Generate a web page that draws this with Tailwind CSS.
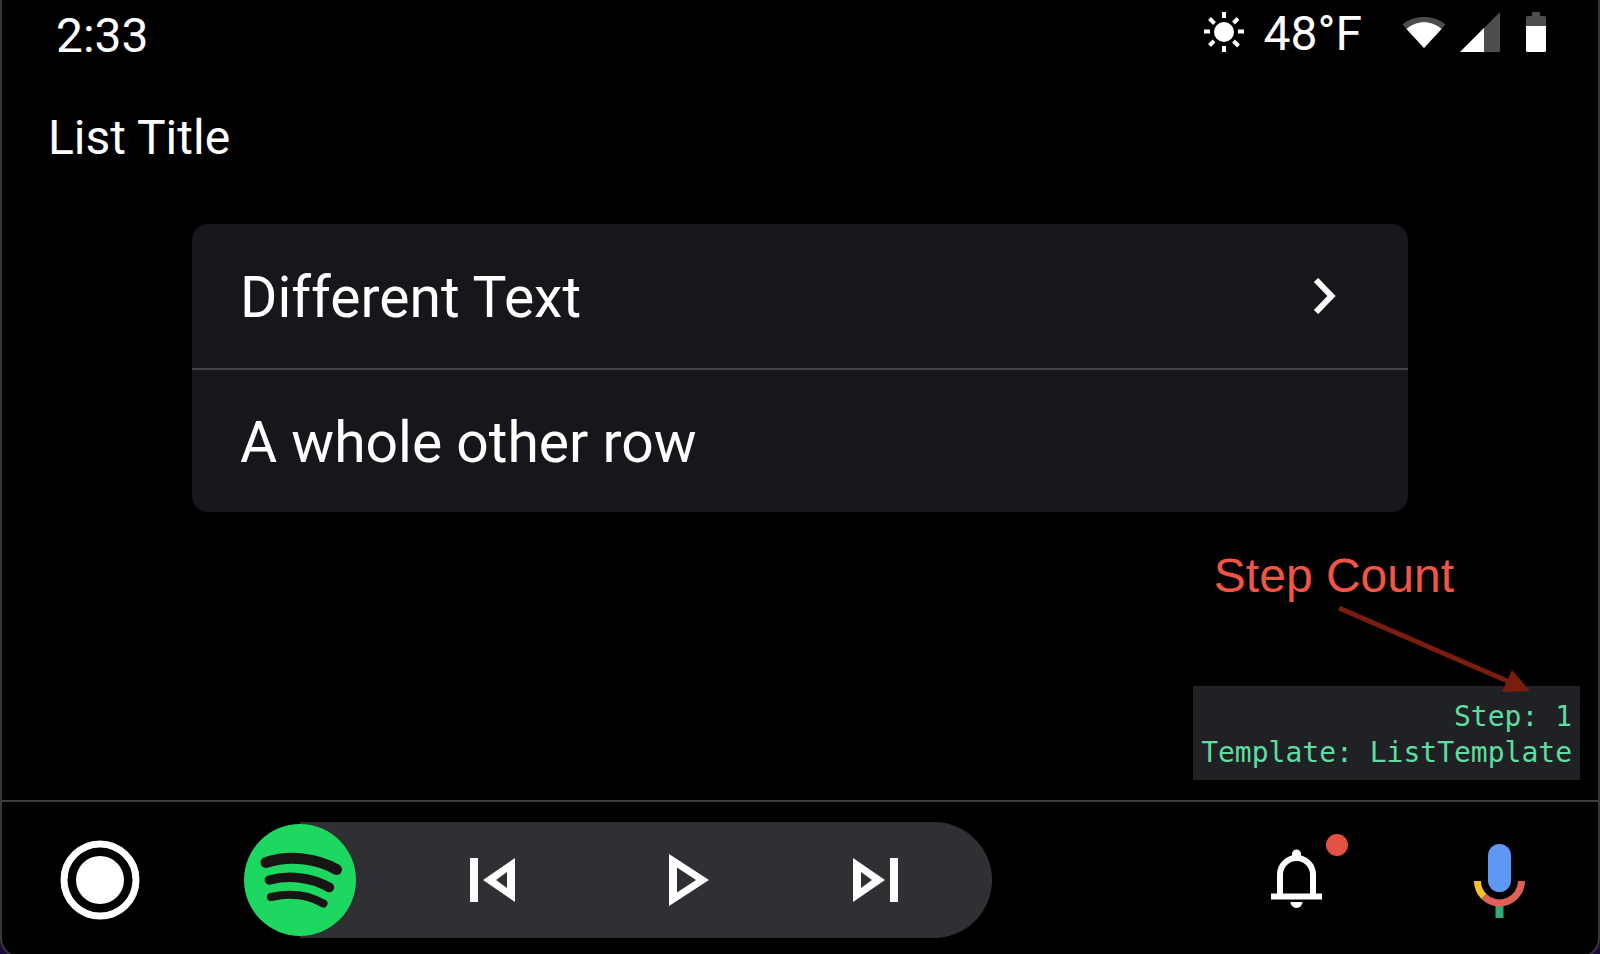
<!DOCTYPE html>
<html lang="en">

<head>
  <meta charset="UTF-8">
  <meta name="viewport" content="width=device-width, initial-scale=1.0">
  <title>List Title</title>
  <script src="https://cdn.jsdelivr.net/npm/@tailwindcss/browser@4"></script>
</head>

<body class="bg-[#1d0a3d] text-white font-[Roboto,sans-serif]">
  <div class="h-screen overflow-hidden">
    <div class="h-[calc(100%+4px)] flex flex-col bg-black border-2 border-t-0 border-[#383838] rounded-b-[20px]">

      <!-- status bar -->
      <header class="flex items-start justify-between pt-2 pl-[54px] pr-[52px] text-[48px]">
        <time class="leading-[56px]">2:33</time>
        <div class="flex items-center h-[52px] leading-[52px]">
          <svg class="w-10 h-11 mr-5" viewBox="0 0 40 44" fill="none" stroke="#fff" stroke-width="4">
            <circle cx="20" cy="20" r="10" fill="#fff" stroke="none" />
            <path d="M20 0v6M20 34v6M0 19.500h6M34 19.500h6M5.500 6.500l5 5M34 6.500l-4.500 4.500M5.500 33.500l4.500-4.500M34.500 34l-5-5" />
          </svg>
          <span>48°F</span>
          <svg class="w-11 h-11 ml-10" viewBox="0 0 44 44">
            <path d="M22 36L.5 12.500C12 2.500 32 2.500 43.500 12.500z" fill="#4d4d4d" />
            <path d="M22 36L4.500 17C14 8 30 8 39.500 17z" fill="#fff" />
          </svg>
          <svg class="w-10 h-11 ml-[14px]" viewBox="0 0 40 44">
            <path d="M0 40L40 0v40z" fill="#4d4d4d" />
            <path d="M0 40L24 16v24z" fill="#fff" />
          </svg>
          <svg class="w-5 h-11 ml-[26px]" viewBox="0 0 20 44">
            <path d="M6 0h8v4h4.500a1.500 1.500 0 0 1 1.500 1.500V14H0V5.500A1.500 1.500 0 0 1 1.500 4H6z" fill="#4d4d4d" />
            <path d="M0 14h20v24.500a1.500 1.500 0 0 1-1.500 1.500h-17A1.500 1.500 0 0 1 0 38.500z" fill="#fff" />
          </svg>
        </div>
      </header>

      <main class="flex-1 flex flex-col">
        <h1 class="mt-[46px] pl-[46px] text-[48px] leading-[56px]">List Title</h1>

        <ul class="mt-[58px] mx-[190px] rounded-2xl overflow-hidden bg-[#16171a] text-[57px] leading-[64px]">
          <li>
            <button class="w-full h-36 flex items-center justify-between pl-12 pr-[60px] text-left">
              <span class="pt-1">Different Text</span>
              <svg class="w-12 h-12" viewBox="0 0 48 48" fill="none" stroke="#fff" stroke-width="6">
                <path d="M16 8l15.500 16L16 40" />
              </svg>
            </button>
          </li>
          <li class="h-36 flex items-center pl-12 border-t-2 border-[#414347]">
            <span class="pt-1">A whole other row</span>
          </li>
        </ul>

        <!-- debug overlay with its callout -->
        <div class="relative self-end mt-auto mr-[18px] mb-5 px-2 pt-[13px] pb-[9px] bg-[#202124] text-right font-['DejaVu_Sans_Mono',monospace] text-[28px] leading-9 text-[#5fdca0]">
          <p>Step: 1</p>
          <p>Template: ListTemplate</p>
          <p class="absolute right-[126px] bottom-[176px] whitespace-nowrap font-['Liberation_Sans',sans-serif] text-[48px] leading-[56px] text-[#f05545]">Step Count</p>
          <svg class="absolute right-[48px] bottom-[84px] w-[196px] h-[92px]" viewBox="0 0 196 92">
            <path d="M3 4L176 79" stroke="#7a1c0e" stroke-width="5" />
            <path d="M176 66l18 21-28 1z" fill="#7a1c0e" />
          </svg>
        </div>
      </main>

      <!-- navigation bar -->
      <footer class="h-[156px] flex items-center border-t-2 border-[#3c3c3c] pt-0.5 pl-[58px] pr-[58px]">
        <button aria-label="Home">
          <svg class="w-20 h-20" viewBox="0 0 80 80">
            <circle cx="40" cy="40" r="36" fill="none" stroke="#fff" stroke-width="7" />
            <circle cx="40" cy="40" r="24" fill="#fff" />
          </svg>
        </button>

        <div class="flex items-center ml-[104px]">
          <button class="relative z-10" aria-label="Spotify">
            <svg class="w-28 h-28" viewBox="0 0 112 112" fill="none" stroke="#191414" stroke-linecap="round">
              <circle cx="56" cy="56" r="56" fill="#1ed760" stroke="none" />
              <path d="M22 38.500C46 31 72 34 92.500 45.500" stroke-width="11" />
              <path d="M25.500 56C45 51 67 53 85.500 63.500" stroke-width="9.500" />
              <path d="M27 73C44 69 63 70 79.500 79.500" stroke-width="8" />
            </svg>
          </button>
          <div class="flex items-center -ml-14 h-[116px] pl-24 pr-5 rounded-r-full bg-[#2f3034]">
            <button class="w-48 flex justify-center" aria-label="Previous">
              <svg class="w-16 h-16" viewBox="0 0 64 64" fill="#fff" fill-rule="evenodd">
                <path d="M10 10h8v44h-8zM23 32L55 10v44zM36 32l11 8V24z" />
              </svg>
            </button>
            <button class="w-48 flex justify-center" aria-label="Play">
              <svg class="w-16 h-16" viewBox="0 0 64 64" fill="#fff" fill-rule="evenodd">
                <path d="M17 6l40 26-40 26zM25 19.500v25L44 32z" />
              </svg>
            </button>
            <button class="w-48 flex justify-center" aria-label="Next">
              <svg class="w-16 h-16" viewBox="0 0 64 64" fill="#fff" fill-rule="evenodd">
                <path d="M46 10h8v44h-8zM41 32L9 10v44zM28 32l-11 8V24z" />
              </svg>
            </button>
          </div>
        </div>

        <button class="relative ml-auto" aria-label="Notifications">
          <svg class="w-16 h-16" viewBox="0 0 64 64" fill="none" stroke="#fff" stroke-width="6">
            <path d="M16 46V26.500a16.500 16.500 0 0 1 33 0V46" />
            <path d="M7 48.500h51" />
            <path d="M28 10V6a4.500 4.500 0 0 1 9 0v4zM26.500 54h12a6 6 0 0 1-12 0z" fill="#fff" stroke="none" />
          </svg>
          <span class="absolute left-[62px] -top-3.5 size-[22px] rounded-full bg-[#e25142]"></span>
        </button>
        <button class="ml-[132px]" aria-label="Voice search">
          <svg class="w-20 h-20" viewBox="0 0 80 80" fill="none" stroke-width="7">
            <rect x="28" y="4" width="23" height="48" rx="11.500" fill="#5e97f6" />
            <path d="M39.500 65v13" stroke="#34a876" stroke-width="8" />
            <path d="M61.500 41a22 22 0 0 1-37.500 15.500" stroke="#e06055" />
            <path d="M17.500 41a22 22 0 0 0 6.500 15.500" stroke="#f6c02c" />
          </svg>
        </button>
      </footer>
    </div>
  </div>
</body>

</html>
